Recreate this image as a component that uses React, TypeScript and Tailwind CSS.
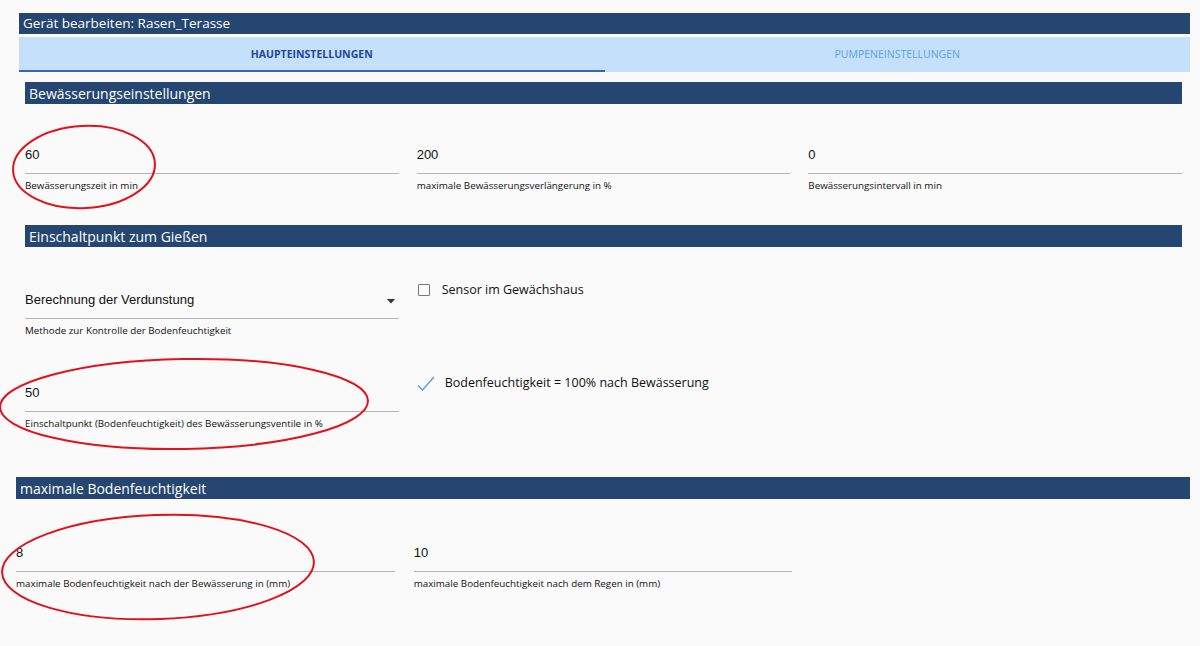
import React from 'react'

const font = { fontFamily: '"Open Sans", "Noto Sans", sans-serif' }

const SectionHeader: React.FC<{ title: string; className?: string }> = ({ title, className }) => (
  <div className={`bg-[#254670] h-[22px] flex items-center px-[4px] text-white text-[14px] ${className ?? ''}`}>
    {title}
  </div>
)

const Field: React.FC<{ value: string; label: string; select?: boolean }> = ({ value, label, select }) => (
  <div className="flex flex-col">
    <div className="h-[20px] flex items-center justify-between font-['Liberation_Sans',Arial,sans-serif] text-[13px] text-[#111]">
      <span>{value}</span>
      {select && (
        <svg width="8" height="5" viewBox="0 0 8 5" className="mr-[4px] mt-[2px]">
          <path d="M0 0 L8 0 L4 4.5 Z" fill="#333" />
        </svg>
      )}
    </div>
    <div className="mt-[8px] border-b border-[#b5b5b5]" />
    <div className="mt-[5px] text-[9.8px] leading-[14px] text-[#111]">{label}</div>
  </div>
)

export default function App() {
  return (
    <div className="relative min-h-screen bg-[#fafafa] pt-[13px] overflow-hidden" style={font}>
      <div className="ml-[19px] mr-[10px]">
        <div className="bg-[#254670] h-[21px] flex items-center px-[4px] text-white text-[13.5px]">
          Gerät bearbeiten: Rasen_Terasse
        </div>
        <div className="mt-[3px] bg-[#c4e0fa] h-[35px] grid grid-cols-2">
          <div className="flex items-center justify-center border-b-2 border-[#3565b8] text-[10.5px] font-bold text-[#24459a] pt-[2px]">
            HAUPTEINSTELLUNGEN
          </div>
          <div className="flex items-center justify-center text-[10.5px] text-[#5aa0ee]">
            PUMPENEINSTELLUNGEN
          </div>
        </div>
      </div>

      <div className="ml-[25px] mr-[18px] mt-[10px]">
        <SectionHeader title="Bewässerungseinstellungen" />
        <div className="mt-[41px] grid grid-cols-3 gap-x-[18px]">
          <Field value="60" label="Bewässerungszeit in min" />
          <Field value="200" label="maximale Bewässerungsverlängerung in %" />
          <Field value="0" label="Bewässerungsintervall in min" />
        </div>

        <SectionHeader title="Einschaltpunkt zum Gießen" className="mt-[32px]" />
        <div className="mt-[33px] grid grid-cols-3 gap-x-[18px]">
          <div className="flex flex-col pt-[10px]">
            <Field value="Berechnung der Verdunstung" label="Methode zur Kontrolle der Bodenfeuchtigkeit" select />
            <div className="mt-[45px]">
              <Field value="50" label="Einschaltpunkt (Bodenfeuchtigkeit) des Bewässerungsventile in %" />
            </div>
          </div>
          <div className="flex flex-col">
            <div className="flex items-center h-[20px] gap-[12px] text-[12.5px] text-[#111]">
              <div className="ml-[1px] w-[12px] h-[12px] border-[1.5px] border-[#777] rounded-[1px] bg-white" />
              <span>Sensor im Gewächshaus</span>
            </div>
            <div className="mt-[73px] flex items-center h-[20px] gap-[10px] text-[12.5px] text-[#111]">
              <svg width="18" height="15" viewBox="0 0 18 15">
                <path d="M1 9.5 L5.5 14 L17 1" fill="none" stroke="#4c9be8" strokeWidth="1.3" />
              </svg>
              <span>Bodenfeuchtigkeit = 100% nach Bewässerung</span>
            </div>
          </div>
          <div />
        </div>
      </div>

      <div className="ml-[16px] mr-[10px] mt-[46px]">
        <SectionHeader title="maximale Bodenfeuchtigkeit" />
        <div className="mt-[44px] grid grid-cols-3 gap-x-[19px]">
          <Field value="8" label="maximale Bodenfeuchtigkeit nach der Bewässerung in (mm)" />
          <Field value="10" label="maximale Bodenfeuchtigkeit nach dem Regen in (mm)" />
          <div />
        </div>
      </div>

      <svg className="absolute left-0 top-0 pointer-events-none" width="1200" height="646">
        <ellipse cx="84" cy="167" rx="71" ry="41" fill="none" stroke="#e0121a" strokeWidth="2" transform="rotate(-3 84 167)" />
        <ellipse cx="184" cy="404" rx="184" ry="45" fill="none" stroke="#e0121a" strokeWidth="2" transform="rotate(-1 184 404)" />
        <ellipse cx="158" cy="567" rx="156" ry="52" fill="none" stroke="#e0121a" strokeWidth="2" transform="rotate(-2 158 567)" />
      </svg>
    </div>
  )
}
